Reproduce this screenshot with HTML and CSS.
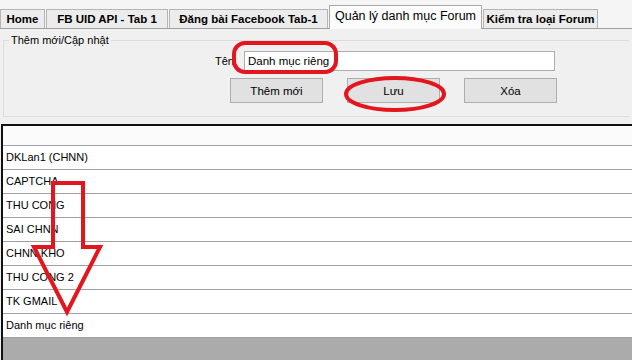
FILE: index.html
```
<html>
  <head>
    <title>Quản lý danh mục Forum</title>
    <meta charset="utf-8">
    <link rel="stylesheet" href="styles.css">
  </head>
  <body>
    <div class="tabs">
      <div class="tab tab--home">Home</div>
      <div class="tab tab--fb">FB UID API - Tab 1</div>
      <div class="tab tab--post">Đăng bài Facebook Tab-1</div>
      <div class="tab tab--active">Quản lý danh mục Forum</div>
      <div class="tab tab--check">Kiểm tra loại Forum</div>
    </div>

    <div class="panel">
      <fieldset class="group">
        <legend>Thêm mới/Cập nhật</legend>
        <div class="form-row">
          <label class="form-row__label">Tên</label>
          <div class="textbox">Danh mục riêng</div>
        </div>
        <div class="buttons">
          <button class="btn">Thêm mới</button>
          <button class="btn">Lưu</button>
          <button class="btn">Xóa</button>
        </div>
      </fieldset>

      <div class="grid">
        <div class="grid__header"></div>
        <div class="grid__row">DKLan1 (CHNN)</div>
        <div class="grid__row">CAPTCHA</div>
        <div class="grid__row">THU CONG</div>
        <div class="grid__row">SAI CHNN</div>
        <div class="grid__row">CHNN KHO</div>
        <div class="grid__row">THU CONG 2</div>
        <div class="grid__row">TK GMAIL</div>
        <div class="grid__row">Danh mục riêng</div>
        <div class="grid__empty"></div>
      </div>
    </div>

    <!-- red marks drawn over the screenshot -->
    <svg class="marks" width="632" height="360" viewBox="0 0 632 360">
      <rect x="234" y="43" width="102" height="29" rx="11" ry="11" />
      <ellipse cx="395" cy="94" rx="49" ry="16" />
      <polygon points="53,183 83,183 83,247 100,247 67,312 34,247 53,247" />
    </svg>
  </body>
</html>
```

FILE: styles.css
```
body {
  margin: 0;
  width: 632px;
  height: 360px;
  overflow: hidden;
  position: relative;
  background: #f0f0f0;
  font-family: "Liberation Sans", Arial, sans-serif;
  font-size: 11px;
  color: #000;
}

.tabs {
  display: flex;
  align-items: flex-end;
  height: 29px;
  padding-left: 0;
  border-bottom: 1px solid #a0a0a0;
  box-sizing: border-box;
  background: #f5f5f5;
}

.tab {
  height: 19px;
  line-height: 18px;
  box-sizing: border-box;
  border: 1px solid #b4b4b4;
  border-bottom: none;
  margin-right: 1px;
  background: #ececec;
  font-weight: bold;
  font-size: 11.5px;
  text-align: center;
}

.tab--home {
  width: 45px;
}
.tab--fb {
  width: 122px;
}
.tab--post {
  width: 159px;
}
.tab--active {
  width: 153px;
  height: 24px;
  line-height: 20px;
  margin-bottom: -1px;
  background: #fcfcfc;
  font-weight: normal;
  font-size: 12.5px;
  border-color: #a8a8a8;
}
.tab--check {
  width: 115px;
}

.panel {
  background: #f0f0f0;
}

.group {
  margin: 5px 3px 0 3px;
  padding: 0;
  height: 83px;
  box-sizing: border-box;
  border: 1px solid #dcdcdc;
  border-right: none;
}

.group legend {
  margin-left: 5px;
  padding: 0 2px;
  font-size: 11px;
  line-height: 13px;
}

.form-row {
  display: flex;
  align-items: center;
  margin-top: 4px;
  padding-left: 210px;
}

.form-row__label {
  width: 20px;
  margin-right: 10px;
  text-align: right;
}

.textbox {
  width: 311px;
  height: 20px;
  line-height: 18px;
  box-sizing: border-box;
  border: 1px solid #abadb3;
  background: #fff;
  padding-left: 3px;
  font-size: 11.5px;
}

.buttons {
  display: flex;
  gap: 24px;
  margin-top: 7px;
  padding-left: 226px;
}

.btn {
  width: 93px;
  height: 25px;
  border: 1px solid #adadad;
  background: #e1e1e1;
  font-family: inherit;
  font-size: 11.5px;
  padding: 0;
}

.grid {
  margin: 7px 0 0 1px;
  border-top: 2px solid #111;
  border-left: 2px solid #111;
}

.grid__header {
  height: 19px;
  background: #fbfbfb;
  border-bottom: 1px solid #9aa3b0;
}

.grid__row {
  height: 23px;
  line-height: 23px;
  padding-left: 3px;
  background: #fff;
  border-bottom: 1px solid #a0a0a0;
  font-size: 11px;
}

.grid__row:last-of-type {
  border-bottom: none;
  height: 24px;
}

.grid__empty {
  height: 30px;
  background: #ababab;
}

.marks {
  position: absolute;
  left: 0;
  top: 0;
  pointer-events: none;
}

.marks rect,
.marks ellipse,
.marks polygon {
  fill: none;
  stroke: #e3161e;
  stroke-width: 4;
  stroke-linejoin: miter;
}
```
